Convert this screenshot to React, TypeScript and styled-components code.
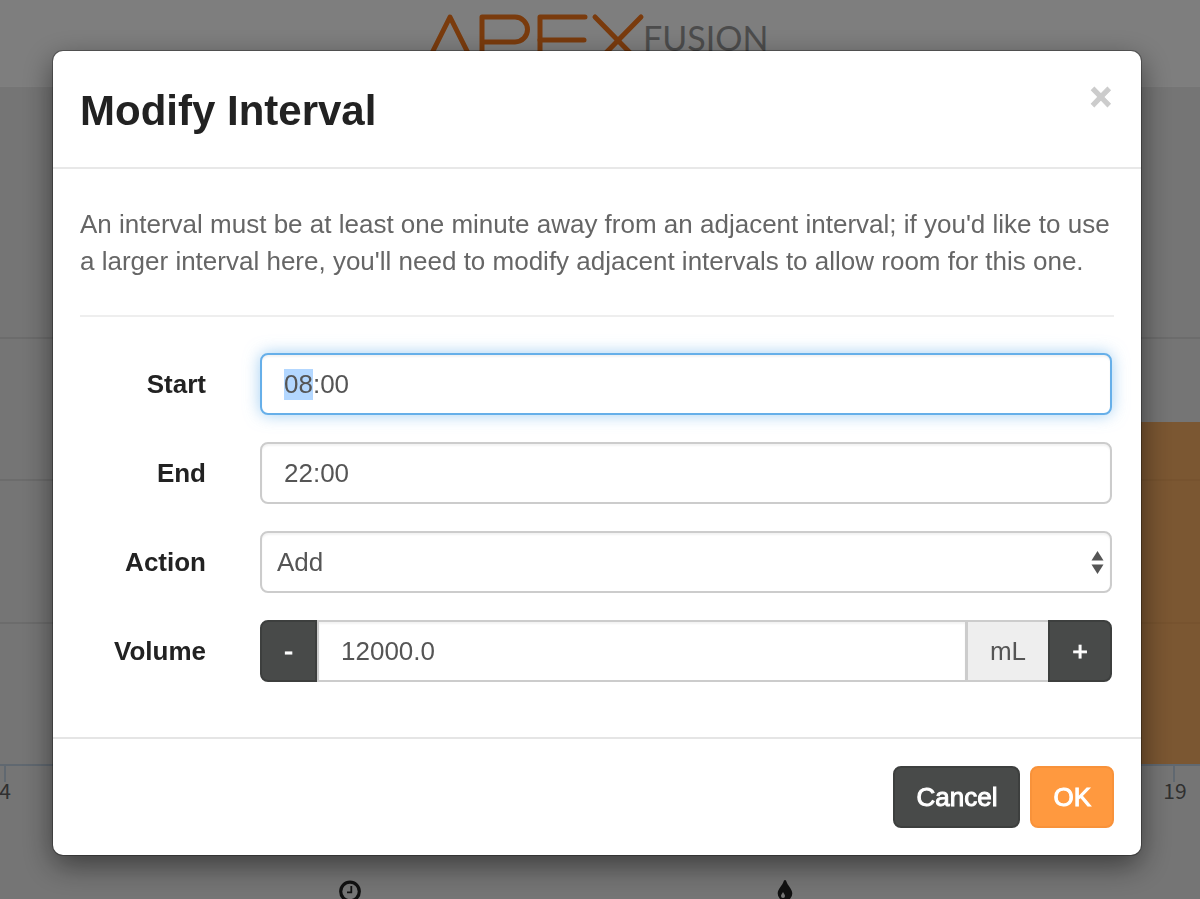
import React, { useEffect, useRef, useState } from "react";
import styled, { createGlobalStyle, css } from "styled-components";

const GlobalStyle = createGlobalStyle`
  *, *::before, *::after { box-sizing: border-box; }
  body {
    margin: 0;
    overflow: hidden;
    background: #ebebeb;
    font-family: "Liberation Sans", Arial, Helvetica, sans-serif;
  }
  button, input, select { font: inherit; margin: 0; }
  ::selection { background: #b3d7ff; color: #555; }
`;

const Page = styled.div`
  height: 100vh;
  overflow: hidden;
  display: flex;
  flex-direction: column;
`;

const TopBar = styled.header`
  flex: none;
  height: 87px;
  padding-top: 13px;
  display: flex;
  justify-content: center;
  background: #fdfdfd;
  border-bottom: 1px solid #fff;
`;

const Logo = styled.svg`
  width: 344px;
  height: 56px;
  overflow: visible;
`;

const ChartArea = styled.main`
  flex: none;
  height: 792px;
`;

const Chart = styled.svg`
  display: block;
  width: 100%;
  height: 780px;
`;

const IconRow = styled.div`
  flex: none;
  display: grid;
  grid-template-columns: 1fr 1fr;
  justify-items: center;
  padding: 0 197px 0 132px;
`;

const Icon = styled.svg`
  width: 24px;
  height: 24px;
`;

const Overlay = styled.div`
  position: fixed;
  inset: 0;
  padding: 51px 59px 44px 53px;
  background: rgba(0, 0, 0, 0.5);
`;

const Dialog = styled.section`
  background: #fff;
  border-radius: 10px;
  box-shadow: 0 0 0 1px rgba(0, 0, 0, 0.3), 0 10px 30px rgba(0, 0, 0, 0.5);
`;

const DialogHeader = styled.header`
  display: flex;
  justify-content: space-between;
  align-items: flex-start;
  height: 118px;
  padding: 32px 29px 0 27px;
  border-bottom: 2px solid #e8e8e8;
`;

const Title = styled.h1`
  margin: 0;
  font-size: 42px;
  line-height: 56px;
  font-weight: 700;
  color: #222;
`;

const CloseButton = styled.button`
  padding: 0;
  border: 0;
  background: none;
  color: #ccc;
  font-size: 38px;
  line-height: 28px;
  font-weight: 700;
  -webkit-text-stroke: 1px #ccc;
`;

const DialogBody = styled.div`
  padding: 37px 27px 55px 27px;
`;

const Note = styled.p`
  margin: 0;
  padding-bottom: 35px;
  border-bottom: 2px solid #eee;
  font-size: 26px;
  line-height: 37px;
  color: #666;
`;

const Form = styled.form`
  display: grid;
  gap: 27px;
  padding: 36px 2px 0 0;
`;

const Row = styled.div`
  display: grid;
  grid-template-columns: 126px 1fr;
  column-gap: 54px;
  align-items: center;
`;

const Label = styled.label`
  font-size: 26px;
  font-weight: 700;
  text-align: right;
  color: #222;
`;

const field = css`
  width: 100%;
  min-width: 0;
  height: 62px;
  border: 2px solid #ccc;
  border-radius: 8px;
  background: #fff;
  box-shadow: inset 0 2px 2px rgba(0, 0, 0, 0.05);
  font-size: 26px;
  color: #555;
  outline: none;

  &:focus {
    border-color: #66afe9;
    box-shadow: inset 0 2px 2px rgba(0, 0, 0, 0.05), 0 0 16px rgba(102, 175, 233, 0.6);
  }
`;

const TextField = styled.input<{ $joined?: boolean }>`
  ${field}
  padding: 0 22px;
  ${(p) => p.$joined && "flex: 1; border-radius: 0;"}
`;

const SelectWrap = styled.div`
  position: relative;
`;

const SelectField = styled.select`
  ${field}
  display: block;
  appearance: none;
  padding: 0 40px 0 15px;
`;

const SelectArrows = styled.svg`
  position: absolute;
  right: 8px;
  top: 20px;
  width: 13px;
  height: 24px;
  pointer-events: none;
`;

const InputGroup = styled.div`
  display: flex;
`;

const Button = styled.button<{ $tone: "dark" | "orange" }>`
  height: 62px;
  padding: 0 21px;
  border: 2px solid ${(p) => (p.$tone === "dark" ? "#3d3f3e" : "#f8923a")};
  border-radius: 8px;
  background: ${(p) => (p.$tone === "dark" ? "#484a49" : "#ff993f")};
  color: #fff;
  font-size: 26px;
  -webkit-text-stroke: 1px #fff;
`;

const StepButton = styled(Button)<{ $side: "left" | "right" }>`
  flex: none;
  width: ${(p) => (p.$side === "left" ? "57px" : "64px")};
  padding: 0;
  border-radius: ${(p) => (p.$side === "left" ? "8px 0 0 8px" : "0 8px 8px 0")};
`;

const Unit = styled.span`
  flex: none;
  width: 81px;
  height: 62px;
  display: flex;
  align-items: center;
  justify-content: center;
  border: 2px solid #ccc;
  border-width: 2px 0 2px 1px;
  background: #eee;
  font-size: 26px;
  color: #555;
`;

const DialogFooter = styled.footer`
  display: flex;
  justify-content: flex-end;
  gap: 10px;
  padding: 27px;
  border-top: 2px solid #e5e5e5;
`;

function ApexLogo() {
  return (
    <Logo viewBox="0 0 344 56" role="img" aria-label="Apex Fusion">
      <g fill="none" stroke="#f5761a" strokeWidth="5" strokeLinecap="round" strokeLinejoin="round">
        <polyline points="-1,50 22,4 45,50" />
        <path d="M54 50V4H87A12.500 12.500 0 0 1 87 29H54" />
        <polyline points="157,4 112,4 112,50" />
        <line x1="112" y1="27" x2="156" y2="27" />
        <line x1="167" y1="4" x2="213" y2="51" />
        <line x1="213" y1="4" x2="167" y2="51" />
      </g>
      <text x="215" y="38" fontFamily="Lato" fontSize="34" fill="#999">
        FUSION
      </text>
    </Logo>
  );
}

function UsageChart() {
  return (
    <Chart aria-hidden="true">
      <g stroke="#d8d8d8" strokeWidth="2">
        <line x1="0" x2="100%" y1="251" y2="251" />
        <line x1="0" x2="100%" y1="393" y2="393" />
        <line x1="0" x2="100%" y1="536" y2="536" />
      </g>
      <rect x="90%" y="335" width="10%" height="343" fill="#f7ae64" />
      <g stroke="#eea75e" strokeWidth="2">
        <line x1="90%" x2="100%" y1="393" y2="393" />
        <line x1="90%" x2="100%" y1="536" y2="536" />
      </g>
      <g stroke="#c0d0e0" strokeWidth="2">
        <line x1="0" x2="100%" y1="678" y2="678" />
        <line x1="5" x2="5" y1="678" y2="695" />
        <line x1="1174" x2="1174" y1="678" y2="695" />
      </g>
      <g fontFamily="Noto Sans CJK SC, sans-serif" fontSize="21" fill="#606060" textAnchor="middle">
        <text x="5" y="712">4</text>
        <text x="1175" y="712">19</text>
      </g>
    </Chart>
  );
}

function ClockIcon() {
  return (
    <Icon viewBox="0 0 24 24" fill="none" stroke="#222" aria-hidden="true">
      <circle cx="12" cy="12.500" r="9.300" strokeWidth="3.200" />
      <path d="M13.300 7V13.300H9" strokeWidth="1.800" />
    </Icon>
  );
}

function DropIcon() {
  return (
    <Icon viewBox="0 0 24 24" aria-hidden="true">
      <path
        fill="#222"
        d="M12 1C12.900 1 13.200 1.800 13.500 2.800C14.500 6.500 19.300 9.800 19.300 14.500A7.300 7.300 0 0 1 4.700 14.500C4.700 9.800 9.500 6.500 10.500 2.800C10.800 1.800 11.100 1 12 1Z"
      />
      <path fill="#ebebeb" d="M10 13C10.600 14.500 12 15.500 12 17A2 2 0 0 1 8 17C8 15.500 9.500 14.500 10 13Z" />
    </Icon>
  );
}

export default function App() {
  const startRef = useRef<HTMLInputElement>(null);
  const [start, setStart] = useState("08:00");
  const [end, setEnd] = useState("22:00");
  const [volume, setVolume] = useState("12000.0");

  useEffect(() => {
    startRef.current?.focus();
    startRef.current?.setSelectionRange(0, 2);
  }, []);

  const step = (by: number) => setVolume((v) => (Number(v) + by).toFixed(1));

  return (
    <>
      <GlobalStyle />
      <Page>
        <TopBar>
          <ApexLogo />
        </TopBar>
        <ChartArea>
          <UsageChart />
        </ChartArea>
        <IconRow>
          <ClockIcon />
          <DropIcon />
        </IconRow>
      </Page>
      <Overlay>
        <Dialog role="dialog" aria-modal="true" aria-labelledby="dialog-title">
          <DialogHeader>
            <Title id="dialog-title">Modify Interval</Title>
            <CloseButton type="button" aria-label="Close">×</CloseButton>
          </DialogHeader>
          <DialogBody>
            <Note>
              An interval must be at least one minute away from an adjacent interval; if you'd like to use a larger
              interval here, you'll need to modify adjacent intervals to allow room for this one.
            </Note>
            <Form id="interval-form" onSubmit={(e) => e.preventDefault()}>
              <Row>
                <Label htmlFor="start">Start</Label>
                <TextField id="start" ref={startRef} value={start} onChange={(e) => setStart(e.target.value)} />
              </Row>
              <Row>
                <Label htmlFor="end">End</Label>
                <TextField id="end" value={end} onChange={(e) => setEnd(e.target.value)} />
              </Row>
              <Row>
                <Label htmlFor="action">Action</Label>
                <SelectWrap>
                  <SelectField id="action" defaultValue="Add">
                    <option>Add</option>
                    <option>Remove</option>
                  </SelectField>
                  <SelectArrows viewBox="0 0 13 24" fill="#555" aria-hidden="true">
                    <path d="M6.500 0L12.500 9.500H.5Z" />
                    <path d="M6.500 23L12.500 13.500H.5Z" />
                  </SelectArrows>
                </SelectWrap>
              </Row>
              <Row>
                <Label htmlFor="volume">Volume</Label>
                <InputGroup>
                  <StepButton type="button" $tone="dark" $side="left" onClick={() => step(-1)}>-</StepButton>
                  <TextField id="volume" $joined value={volume} onChange={(e) => setVolume(e.target.value)} />
                  <Unit>mL</Unit>
                  <StepButton type="button" $tone="dark" $side="right" onClick={() => step(1)}>+</StepButton>
                </InputGroup>
              </Row>
            </Form>
          </DialogBody>
          <DialogFooter>
            <Button type="button" $tone="dark">Cancel</Button>
            <Button type="submit" form="interval-form" $tone="orange">OK</Button>
          </DialogFooter>
        </Dialog>
      </Overlay>
    </>
  );
}
